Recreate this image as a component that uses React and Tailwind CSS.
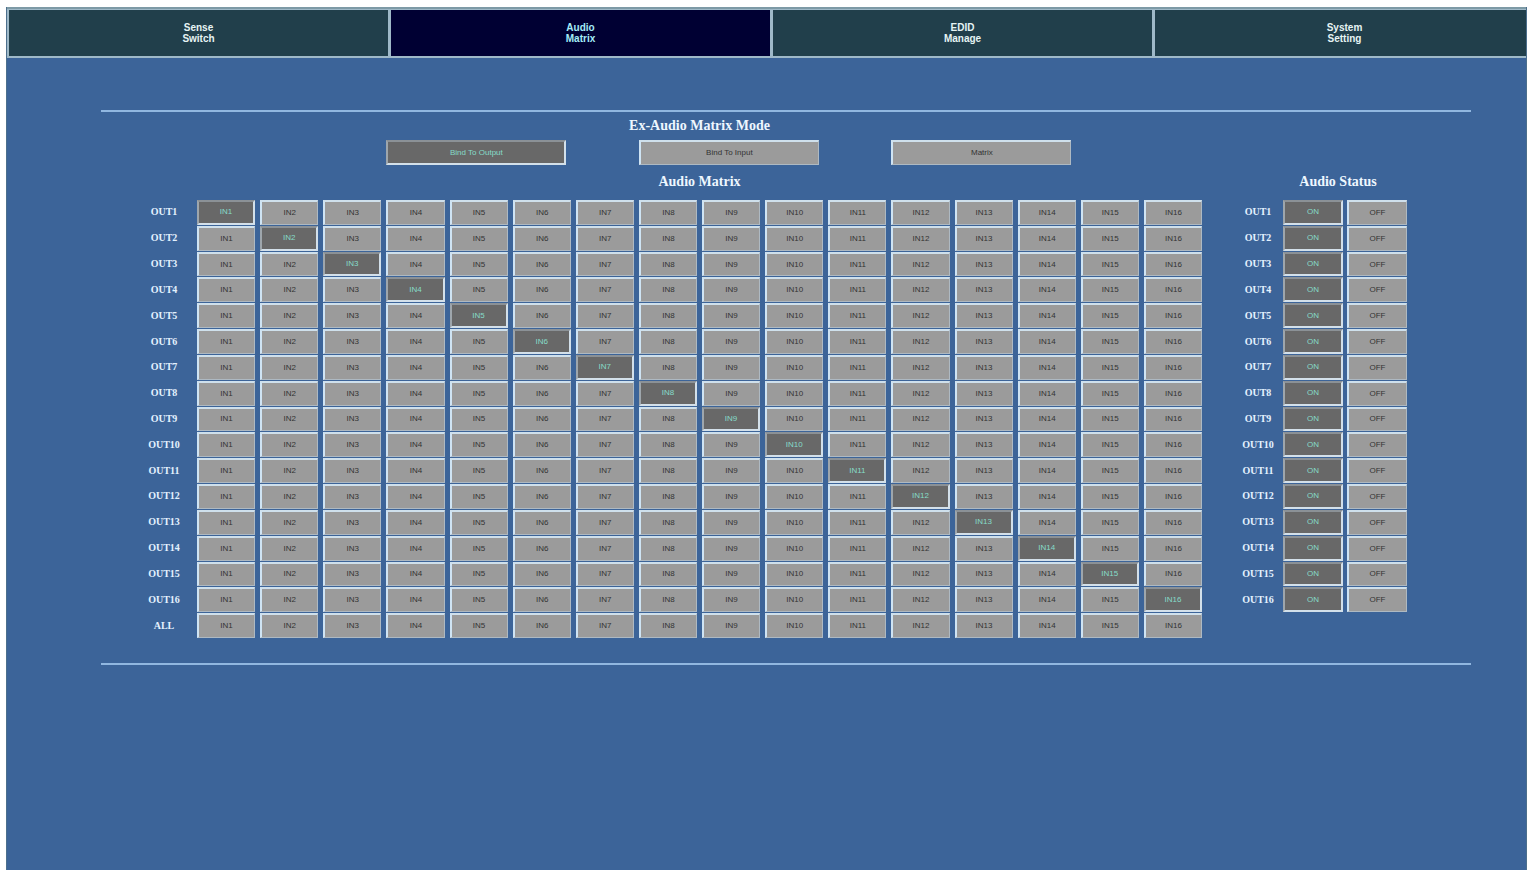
import React, { useState } from 'react';
import clsx from 'clsx';

const TABS = [
  ['Sense', 'Switch'],
  ['Audio', 'Matrix'],
  ['EDID', 'Manage'],
  ['System', 'Setting'],
];

const MODES = [
  { name: 'Bind To Output', place: 'col-start-5' },
  { name: 'Bind To Input', place: 'col-start-9' },
  { name: 'Matrix', place: 'col-start-13' },
];

const CHANNELS = Array.from({ length: 16 }, (_, i) => i + 1);

const COLUMNS = 'grid grid-cols-[56px_repeat(16,minmax(0,1fr))] gap-x-[5px]';
const ROWS = 'h-[438px] grid-rows-[repeat(17,minmax(0,1fr))] gap-y-px';

// Bevelled grey button, sunken while it is selected
function PadButton({ selected, className, children, ...rest }) {
  return (
    <button
      type="button"
      aria-pressed={selected}
      className={clsx(
        'flex items-center justify-center overflow-hidden text-[8px] leading-none cursor-pointer',
        selected
          ? 'bg-[#686868] text-[#86dcc8] border-t-2 border-l-2 border-b-2 border-r-2 border-t-[#8b9196] border-l-[#9ea6ac] border-b-[#d3e0ea] border-r-[#d3e0ea]'
          : 'bg-[#9b9b9b] text-[#333333] border-t-2 border-l-2 border-b border-r border-t-[#cfe0ec] border-l-[#cfe4f4] border-b-[#aeb9c2] border-r-[#aeb9c2]',
        className
      )}
      {...rest}
    >
      {children}
    </button>
  );
}

function RowLabel({ children }) {
  return (
    <div className="flex items-center justify-center font-['Liberation_Serif',serif] text-[10px] leading-none font-bold text-[#e4f2ff]">
      {children}
    </div>
  );
}

function Heading({ className, children }) {
  return (
    <h2
      className={clsx(
        "text-center font-['Liberation_Serif',serif] text-[14px] leading-5 font-bold text-[#eef7ff]",
        className
      )}
    >
      {children}
    </h2>
  );
}

export default function App() {
  const [tab, setTab] = useState(1);
  const [mode, setMode] = useState('Bind To Output');
  const [routes, setRoutes] = useState(CHANNELS);
  const [status, setStatus] = useState(CHANNELS.map(() => true));

  const setRoute = (out, input) => setRoutes(routes.map((r, i) => (i === out ? input : r)));
  const setOn = (out, on) => setStatus(status.map((s, i) => (i === out ? on : s)));

  return (
    <div className="min-h-screen flex flex-col bg-white pt-[7px] pl-1.5 pr-0.5 font-['Liberation_Sans',sans-serif]">
      <div className="flex-1 flex flex-col bg-[#3c6499] border-x border-[#4c6f8c]">
        {/* Top tabs, the last one runs off the right edge */}
        <nav className="overflow-hidden border-t-2 border-[#7d9aa6] bg-[#9fb9c8]">
          <div className="-mr-2 flex gap-[3px] pt-px pb-0.5 pl-0.5">
            {TABS.map(([first, second], i) => (
              <button
                key={first}
                type="button"
                aria-current={tab === i ? 'page' : undefined}
                onClick={() => setTab(i)}
                className={clsx(
                  'flex-1 h-[46px] text-[10px] leading-[11px] font-bold cursor-pointer',
                  tab === i ? 'bg-[#000033] text-[#a4ecf8]' : 'bg-[#213f4b] text-[#e6f4f4]'
                )}
              >
                {first}
                <br />
                {second}
              </button>
            ))}
          </div>
        </nav>

        <main className="mt-[52px] ml-[94px] mr-[55px] flex items-end border-y-2 border-[#91b7e0] pt-1 pb-[25px]">
          <section className="flex-1 pl-[35px]">
            <Heading className="pl-[61px]">Ex-Audio Matrix Mode</Heading>
            <div className={clsx(COLUMNS, 'mt-1')}>
              {MODES.map(({ name, place }) => (
                <div key={name} className={clsx(place, 'col-span-3')}>
                  <PadButton
                    selected={mode === name}
                    onClick={() => setMode(name)}
                    className="h-[25px] w-[180px] max-w-full"
                  >
                    {name}
                  </PadButton>
                </div>
              ))}
            </div>

            <Heading className="mt-[7px] pl-[61px]">Audio Matrix</Heading>
            <div className={clsx(COLUMNS, ROWS, 'mt-2')}>
              {CHANNELS.map((out, row) => (
                <React.Fragment key={out}>
                  <RowLabel>OUT{out}</RowLabel>
                  {CHANNELS.map((input) => (
                    <PadButton
                      key={input}
                      selected={routes[row] === input}
                      onClick={() => setRoute(row, input)}
                    >
                      IN{input}
                    </PadButton>
                  ))}
                </React.Fragment>
              ))}
              <RowLabel>ALL</RowLabel>
              {CHANNELS.map((input) => (
                <PadButton
                  key={input}
                  selected={false}
                  onClick={() => setRoutes(CHANNELS.map(() => input))}
                >
                  IN{input}
                </PadButton>
              ))}
            </div>
          </section>

          <section className="ml-[35px] mr-16">
            <Heading className="pl-8">Audio Status</Heading>
            <div className={clsx('mt-2 grid grid-cols-[42px_60px_60px] gap-x-1', ROWS)}>
              {CHANNELS.map((out, row) => (
                <React.Fragment key={out}>
                  <RowLabel>OUT{out}</RowLabel>
                  <PadButton selected={status[row]} onClick={() => setOn(row, true)}>
                    ON
                  </PadButton>
                  <PadButton selected={!status[row]} onClick={() => setOn(row, false)}>
                    OFF
                  </PadButton>
                </React.Fragment>
              ))}
            </div>
          </section>
        </main>
      </div>
    </div>
  );
}
